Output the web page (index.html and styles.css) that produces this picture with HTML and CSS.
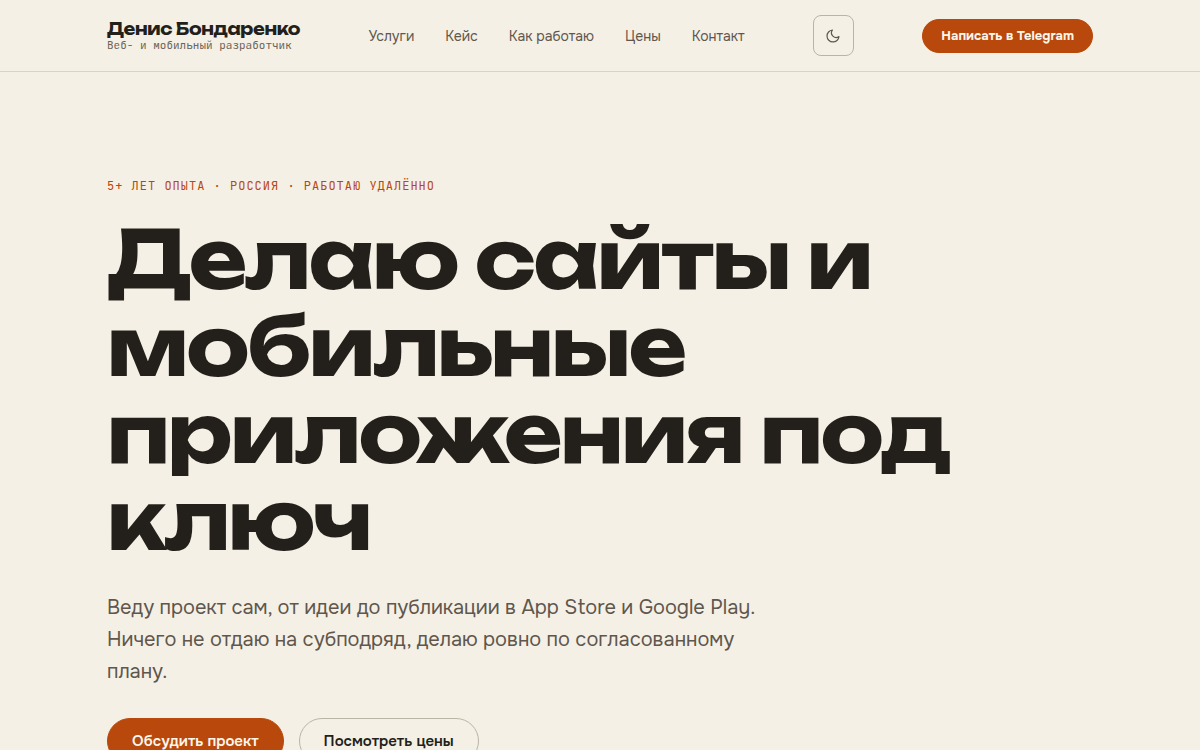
FILE: index.html
```html
<!DOCTYPE html>
<html lang="ru">
  <head>
    <meta charset="UTF-8" />
    <meta name="viewport" content="width=device-width, initial-scale=1.0" />
    <title>Денис Бондаренко</title>
    <link rel="stylesheet" href="styles.css">
  </head>
  <body>
    <header class="header">
      <div class="container header-inner">
        <a class="logo" href="#top">
          <span class="logo-name">Денис Бондаренко</span>
          <span class="logo-role">Веб- и мобильный разработчик</span>
        </a>
        <nav class="nav">
          <a href="#services">Услуги</a>
          <a href="#case">Кейс</a>
          <a href="#process">Как работаю</a>
          <a href="#prices">Цены</a>
          <a href="#contact">Контакт</a>
        </nav>
        <button class="theme-toggle" type="button" aria-label="Сменить тему">
          <svg viewBox="0 0 24 24" width="16" height="16" fill="none" stroke="currentColor" stroke-width="1.8" stroke-linecap="round" stroke-linejoin="round">
            <path d="M21 12.8A9 9 0 1 1 11.2 3a7 7 0 0 0 9.8 9.8z" />
          </svg>
        </button>
        <a class="btn btn-small btn-primary" href="#telegram">Написать в Telegram</a>
      </div>
    </header>

    <main id="top">
      <section class="hero container">
        <p class="eyebrow">5+ лет опыта · Россия · Работаю удалённо</p>
        <h1>Делаю сайты и мобильные приложения под ключ</h1>
        <p class="lead">Веду проект сам, от идеи до публикации в App Store и Google Play. Ничего не отдаю на субподряд, делаю ровно по согласованному плану.</p>
        <div class="actions">
          <a class="btn btn-primary" href="#contact">Обсудить проект</a>
          <a class="btn btn-outline" href="#prices">Посмотреть цены</a>
        </div>
      </section>
    </main>
  </body>
</html>
```
FILE: styles.css
```css
* {
  box-sizing: border-box;
}

body {
  margin: 0;
  background-color: #f5f0e6;
  color: #231f1a;
  font-family: Onest, Inter, sans-serif;
}

a {
  color: inherit;
  text-decoration: none;
}

.container {
  max-width: 1034px;
  margin: 0 auto;
  padding: 0 24px;
}

.header {
  border-bottom: 1px solid #d9d3c6;
}

.header-inner {
  display: flex;
  align-items: center;
  justify-content: space-between;
  padding-top: 15px;
  padding-bottom: 15px;
}

.logo {
  display: flex;
  flex-direction: column;
}

.logo-name {
  font-family: Unbounded, "DejaVu Sans", sans-serif;
  font-size: 16px;
  font-weight: 700;
  line-height: 18px;
  letter-spacing: -0.02em;
}

.logo-role {
  font-family: "JetBrains Mono", "DejaVu Sans Mono", monospace;
  font-size: 11px;
  line-height: 14px;
  color: #6b6459;
}

.nav {
  display: flex;
  gap: 31px;
  font-size: 14px;
  color: #5f574d;
}

.theme-toggle {
  display: flex;
  align-items: center;
  justify-content: center;
  width: 41px;
  height: 41px;
  padding: 0;
  border: 1px solid #bab4a7;
  border-radius: 8px;
  background: none;
  color: #5f574d;
  cursor: pointer;
}

.btn {
  padding: 12px 24px;
  border: 1px solid transparent;
  border-radius: 999px;
  font-size: 15px;
  font-weight: 600;
  line-height: 20px;
}

.btn-small {
  padding: 6px 18px;
  font-size: 13px;
  font-weight: 700;
}

.btn-primary {
  background-color: #b8480b;
  border-color: #b8480b;
  color: #fdf6ea;
}

.btn-outline {
  border-color: #bab4a7;
}

.hero {
  padding-top: 106px;
  padding-bottom: 96px;
}

.eyebrow {
  margin: 0 0 22px;
  font-family: "JetBrains Mono", "DejaVu Sans Mono", monospace;
  font-size: 12px;
  line-height: 16px;
  letter-spacing: 1px;
  text-transform: uppercase;
  color: #b8480b;
}

h1 {
  max-width: 900px;
  margin: 0 0 28px;
  font-family: Unbounded, "DejaVu Sans", sans-serif;
  font-size: 80px;
  font-weight: 700;
  line-height: 87px;
  letter-spacing: -0.03em;
}

.lead {
  max-width: 680px;
  margin: 0 0 30px;
  font-size: 20px;
  line-height: 32px;
  color: #5f574d;
}

.actions {
  display: flex;
  gap: 15px;
}
```
